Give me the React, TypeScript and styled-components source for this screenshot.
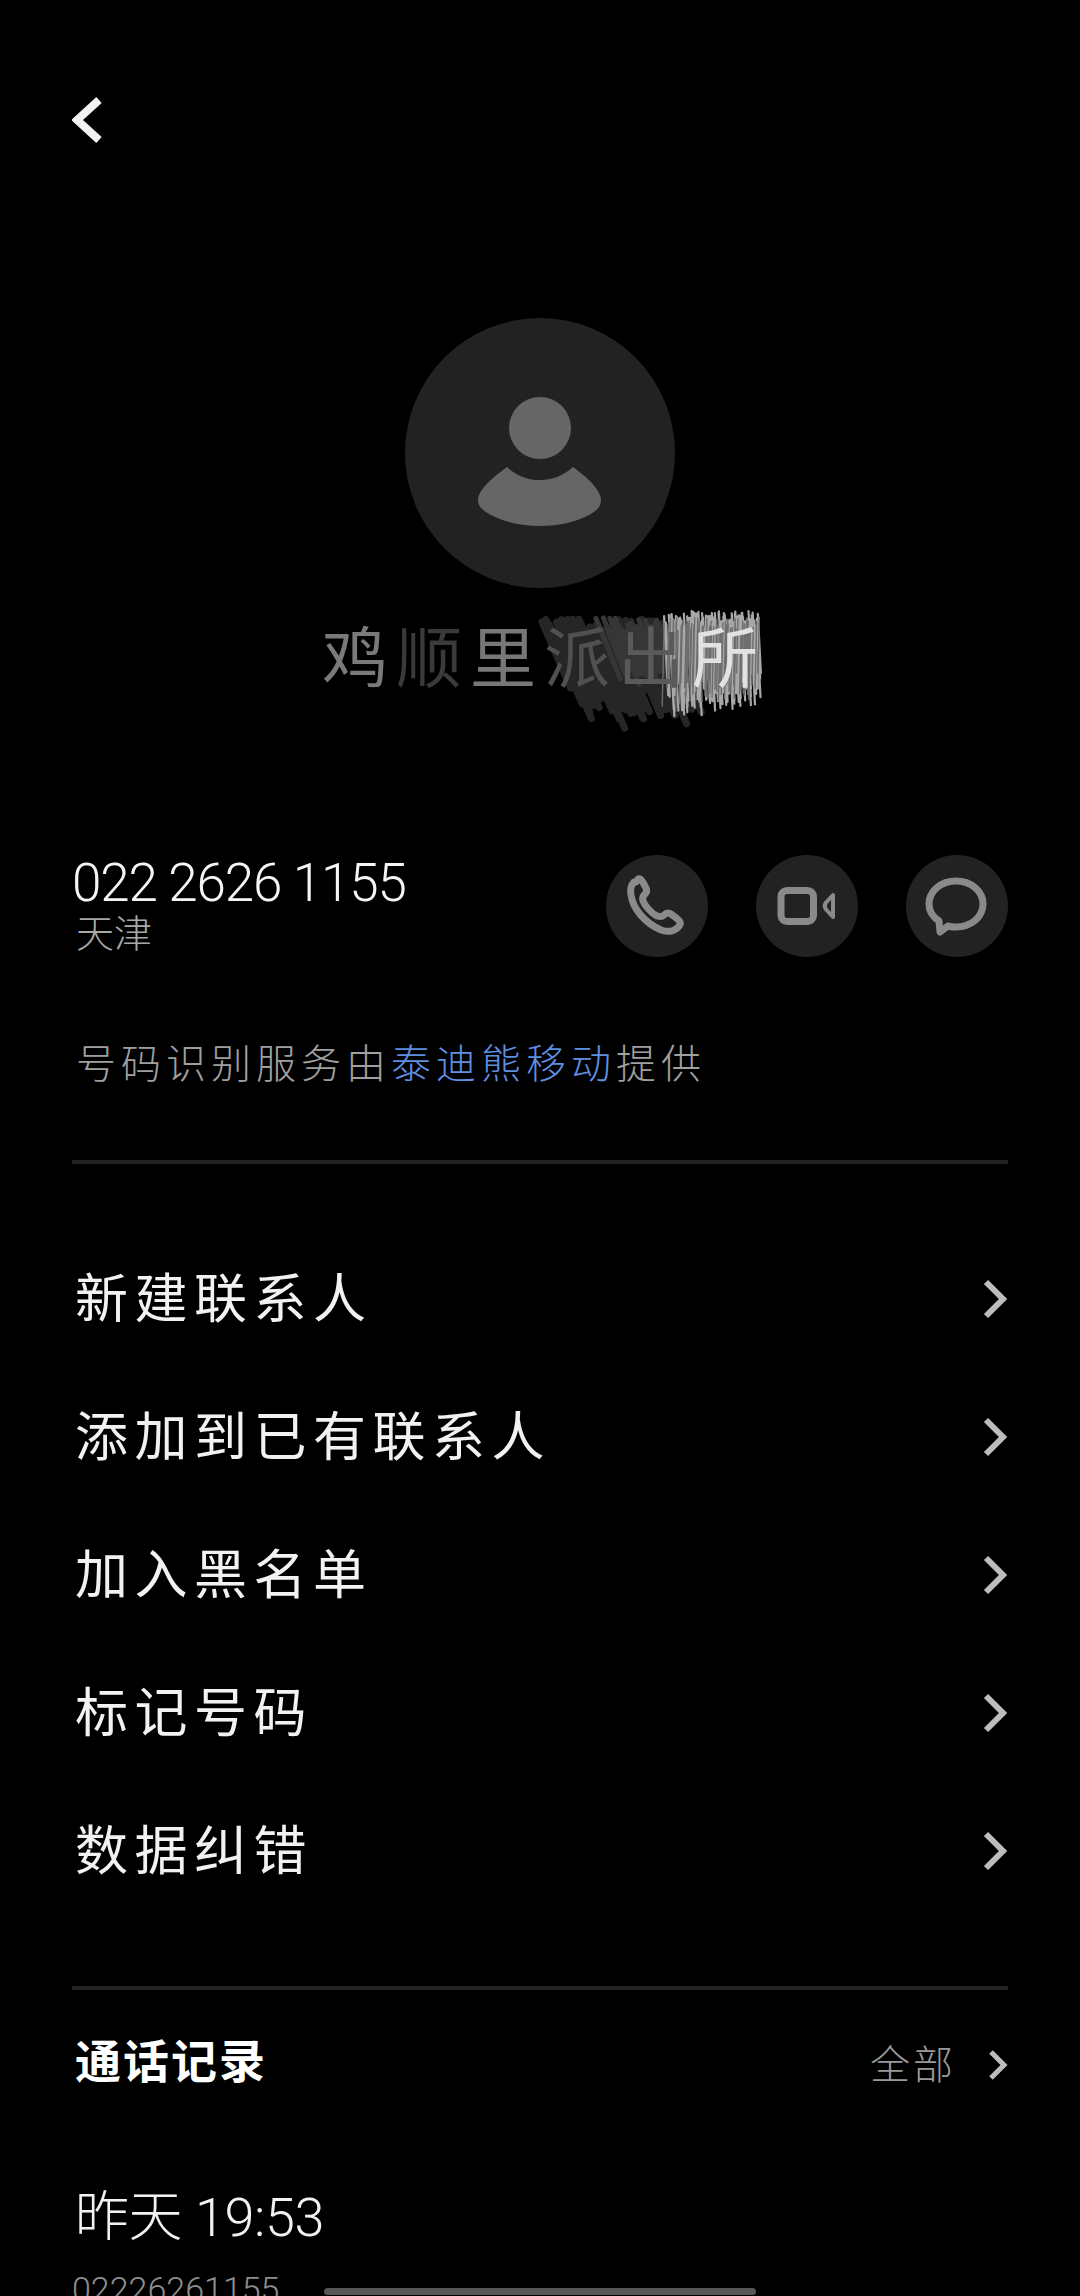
import { createGlobalStyle, styled } from "styled-components";

const GlobalStyle = createGlobalStyle`
  html, body {
    margin: 0;
    padding: 0;
    background: #000;
  }
`;

const FONT = `Roboto, "Noto Sans CJK SC", sans-serif`;

const MENU = ["新建联系人", "添加到已有联系人", "加入黑名单", "标记号码", "数据纠错"];

const NAME = [
  { ch: "鸡", tone: "#7a7a7a" },
  { ch: "顺", tone: "#3a3a3a" },
  { ch: "里", tone: "#777777" },
  { ch: "派", tone: "#505050" },
  { ch: "出", tone: "#5a5a5a" },
  { ch: "所", tone: "#e2e2e2" },
];

// small seeded generator so the scribble is the same on every load
function makeStrokes(
  count: number,
  seed: number,
  box: { x: number; y: number; w: number; h: number },
  dx: number,
  dy: number,
  taper = 0
) {
  let s = seed;
  const rnd = () => {
    s = (s * 16807) % 2147483647;
    return s / 2147483647;
  };
  const out: string[] = [];
  for (let i = 0; i < count; i++) {
    const x = box.x + (box.w * i) / count + rnd() * 6;
    const y = box.y + rnd() * box.h;
    const k = (0.7 + rnd() * 0.3) * (1 - (taper * i) / count);
    out.push(`M${x.toFixed(1)} ${y.toFixed(1)}l${(dx * k).toFixed(1)} ${(dy * k).toFixed(1)}`);
  }
  return out.join("");
}

const darkStrokes = makeStrokes(64, 77, { x: 224, y: 6, w: 122, h: 22 }, 38, 88);
const midStrokes = makeStrokes(30, 31, { x: 278, y: 4, w: 70, h: 18 }, 22, 56);
const lightStrokes = makeStrokes(120, 1234, { x: 346, y: -2, w: 92, h: 16 }, 5, 96, 0.18);
const greyStrokes = makeStrokes(60, 4321, { x: 346, y: 4, w: 92, h: 16 }, -2, 84, 0.18);

export default function App() {
  return (
    <Page>
      <GlobalStyle />
      <BackIcon width="30" height="46" viewBox="0 0 30 46">
        <path d="M27 3 L5 23 L27 43" />
      </BackIcon>

      <Avatar>
        <svg width="270" height="270" viewBox="0 0 270 270">
          <circle cx="135" cy="110" r="31" fill="#666" />
          <path
            fill="#666"
            d="M102 149 C112 158 123 162 135 162 C147 162 158 158 168 149 C182 159 196 172 196 182 C196 190 190 194 182 198 C168 205 150 208 135 208 C120 208 102 205 88 198 C80 194 73 190 73 182 C73 172 88 159 102 149Z"
          />
        </svg>
      </Avatar>

      <NameRow>
        <Scribble width="444" height="120" viewBox="0 0 444 120">
          <path d={darkStrokes} stroke="#262626" strokeWidth="7" strokeLinecap="round" />
          <path d={midStrokes} stroke="#363636" strokeWidth="5" strokeLinecap="round" />
          <path d={lightStrokes} stroke="#a8a8a8" strokeWidth="2.2" strokeLinecap="round" />
          <path d={greyStrokes} stroke="#6e6e6e" strokeWidth="1.4" strokeLinecap="round" />
        </Scribble>
        {NAME.map((n, i) => (
          <NameChar key={i} $tone={n.tone}>
            {n.ch}
          </NameChar>
        ))}
      </NameRow>

      <ContactRow>
        <ContactText>
          <PhoneNumber>022 2626 1155</PhoneNumber>
          <Location>天津</Location>
        </ContactText>
        <Actions>
          <RoundButton>
            <ActionIcon width="102" height="102" viewBox="0 0 102 102">
              <path d="M28 27 c-3 3 -4 7 -3 13 c2 14 14 28 30 35 c6 2 11 2 15 -1 c3 -2 5 -5 4 -7 c-1 -2 -4 -4 -9 -8 c-3 -2 -5 -1 -7 1 c-2 2 -4 2 -7 1 c-6 -3 -12 -10 -14 -15 c-1 -3 0 -5 2 -7 c2 -2 2 -4 1 -6 c-2 -4 -4 -8 -6 -9 c-2 -1 -2 0 -4 3z" />
            </ActionIcon>
          </RoundButton>
          <RoundButton>
            <ActionIcon width="102" height="102" viewBox="0 0 102 102">
              <rect x="25" y="35.5" width="32.5" height="31" rx="6" />
              <path strokeWidth="4" d="M77 40 L70 47.5 Q67.5 51 70 54.5 L77 62 Z" />
            </ActionIcon>
          </RoundButton>
          <RoundButton>
            <ActionIcon width="102" height="102" viewBox="0 0 102 102">
              <path d="M50 26 C65 26 77 36 77 49 C77 62 65 72 50 72 C47 72 44 72 42 71 L34 77 L33 66 C27 62 23 56 23 49 C23 36 35 26 50 26Z" />
            </ActionIcon>
          </RoundButton>
        </Actions>
      </ContactRow>

      <Note>
        号码识别服务由<NoteLink>泰迪熊移动</NoteLink>提供
      </Note>

      <Divider $top={70} />

      <Menu>
        {MENU.map((label) => (
          <MenuRow key={label}>
            <MenuLabel>{label}</MenuLabel>
            <Chevron width="26" height="42" viewBox="0 0 26 42">
              <path d="M4 4 L21 21 L4 38" />
            </Chevron>
          </MenuRow>
        ))}
      </Menu>

      <Divider $top={66} />

      <CallHeader>
        <CallTitle>通话记录</CallTitle>
        <CallAll>
          <CallAllLabel>全部</CallAllLabel>
          <SmallChevron width="20" height="32" viewBox="0 0 20 32">
            <path d="M3 3 L16 16 L3 29" />
          </SmallChevron>
        </CallAll>
      </CallHeader>

      <CallTime>昨天 19:53</CallTime>
      <CallNumber>02226261155</CallNumber>

      <HomeBar />
    </Page>
  );
}

const Page = styled.div`
  position: relative;
  box-sizing: border-box;
  width: 1080px;
  height: 2296px;
  padding: 97px 72px 0;
  overflow: hidden;
  background: #000;
  color: #fff;
  font-family: ${FONT};
`;

const BackIcon = styled.svg`
  display: block;
  fill: none;
  stroke: #f2f2f2;
  stroke-width: 8;
`;

const Avatar = styled.div`
  width: 270px;
  height: 270px;
  margin: 175px auto 0;
  border-radius: 50%;
  background: #222;
  svg {
    display: block;
  }
`;

const NameRow = styled.div`
  position: relative;
  display: flex;
  justify-content: center;
  gap: 8px;
  width: 444px;
  height: 74px;
  margin: 35px auto 0;
`;

const Scribble = styled.svg`
  position: absolute;
  top: -10px;
  left: 0;
  overflow: visible;
  fill: none;
`;

const NameChar = styled.span<{ $tone: string }>`
  position: relative;
  width: 66px;
  font-size: 66px;
  line-height: 74px;
  color: ${(props) => props.$tone};
`;

const ContactRow = styled.div`
  display: flex;
  justify-content: space-between;
  align-items: flex-start;
  margin-top: 158px;
`;

const ContactText = styled.div`
  display: flex;
  flex-direction: column;
`;

const PhoneNumber = styled.div`
  padding-top: 1px;
  font-size: 53px;
  font-weight: 300;
  line-height: 54px;
  letter-spacing: -1.2px;
  color: #f5f5f5;
`;

const Location = styled.div`
  margin: 2px 0 0 4px;
  font-size: 38px;
  font-weight: 300;
  line-height: 45px;
  color: #a8a8a8;
`;

const Actions = styled.div`
  display: flex;
  gap: 48px;
`;

const RoundButton = styled.div`
  width: 102px;
  height: 102px;
  border-radius: 50%;
  background: #222;
`;

const ActionIcon = styled.svg`
  display: block;
  fill: none;
  stroke: #8a8a8a;
  stroke-width: 7;
  stroke-linejoin: round;
`;

const Note = styled.div`
  margin: 83px 0 0 4px;
  font-size: 40px;
  font-weight: 300;
  line-height: 50px;
  letter-spacing: 5px;
  color: #a0a0a0;
`;

const NoteLink = styled.span`
  color: #5f8fe0;
`;

const Divider = styled.div<{ $top: number }>`
  height: 4px;
  margin-top: ${(props) => props.$top}px;
  background: #222;
`;

const Menu = styled.div`
  display: flex;
  flex-direction: column;
  margin-top: 66px;
`;

const MenuRow = styled.div`
  display: flex;
  justify-content: space-between;
  align-items: center;
  height: 138px;
`;

const MenuLabel = styled.span`
  margin: 0 0 8px 3px;
  font-size: 53px;
  font-weight: 400;
  letter-spacing: 6.5px;
  color: #f2f2f2;
`;

const Chevron = styled.svg`
  display: block;
  fill: none;
  stroke: #bdbdbd;
  stroke-width: 6;
`;

const CallHeader = styled.div`
  display: flex;
  justify-content: space-between;
  align-items: center;
  height: 60px;
  margin-top: 45px;
`;

const CallTitle = styled.span`
  margin: 0 0 14px 3px;
  font-size: 46px;
  font-weight: 700;
  letter-spacing: 2px;
  color: #fff;
`;

const CallAll = styled.div`
  display: flex;
  align-items: center;
  gap: 32px;
`;

const CallAllLabel = styled.span`
  margin-bottom: 6px;
  font-size: 40px;
  font-weight: 300;
  letter-spacing: 3px;
  color: #999;
`;

const SmallChevron = styled.svg`
  display: block;
  fill: none;
  stroke: #bdbdbd;
  stroke-width: 5;
`;

const CallTime = styled.div`
  margin: 93px 0 0 3px;
  font-size: 54px;
  font-weight: 300;
  line-height: 60px;
  letter-spacing: -0.4px;
  color: #f2f2f2;
`;

const CallNumber = styled.div`
  margin-top: 21px;
  font-size: 34px;
  font-weight: 300;
  line-height: 40px;
  color: #8e8e8e;
`;

const HomeBar = styled.div`
  position: absolute;
  left: 324px;
  bottom: 1px;
  width: 432px;
  height: 7px;
  border-radius: 4px;
  background: #565656;
`;
